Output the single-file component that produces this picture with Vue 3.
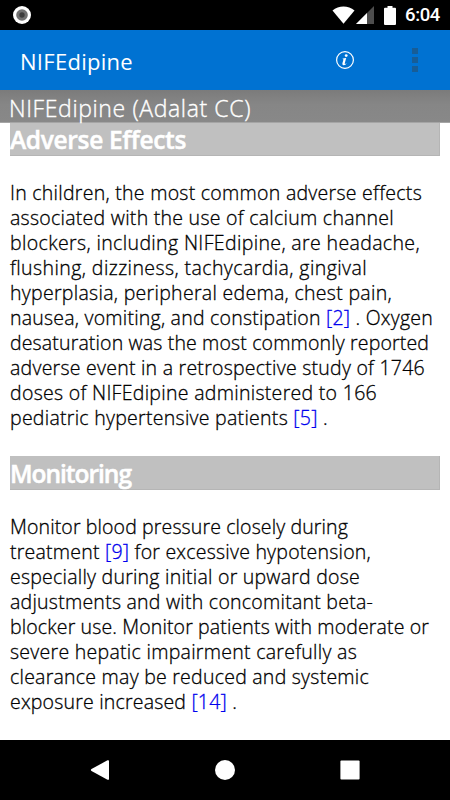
<template>
  <div class="screen">
    <header class="status-bar">
      <svg class="record-icon" viewBox="0 0 20 20">
        <circle cx="10" cy="10" r="9" fill="#fff" />
        <circle cx="10" cy="10" r="5.8" fill="#707070" />
        <circle cx="10" cy="10" r="2.7" fill="#3c3c3c" />
      </svg>
      <div class="status-icons">
        <svg class="wifi" viewBox="0 0 24 18"><path d="M0.5 4.4C7 -1.2 17 -1.2 23.5 4.4L12 18Z" /></svg>
        <svg class="signal" viewBox="0 0 18 18">
          <path d="M18 0V18H0Z" fill="#4d4d4d" />
          <path d="M11 7V18H0Z" />
        </svg>
        <svg class="battery" viewBox="0 0 12 19"><path d="M3.5 0H8.5V1.7H11Q12 1.7 12 2.7V18Q12 19 11 19H1Q0 19 0 18V2.7Q0 1.7 1 1.7H3.5Z" /></svg>
        <span class="clock"><FitText text="6:04" :width="35" /></span>
      </div>
    </header>

    <div class="app-bar">
      <h1 class="app-title"><FitText text="NIFEdipine" :width="113" /></h1>
      <button class="info-button" aria-label="Info">
        <svg viewBox="0 0 20 20">
          <circle cx="10" cy="10" r="8.4" fill="none" stroke="#fff" stroke-width="1.2" />
          <circle cx="11.2" cy="5.6" r="1.4" fill="#fff" />
          <path d="M7.3 8.8Q9.2 8.1 11.2 7.9L9.7 13.6Q9.6 14.6 11.8 13.2Q10.3 15.6 8.4 15.3Q6.9 14.9 7.4 13.2L8.5 9.5Z" fill="#fff" />
        </svg>
      </button>
      <button class="more-button" aria-label="More">
        <i></i><i></i><i></i>
      </button>
    </div>

    <div class="drug-bar"><FitText text="NIFEdipine (Adalat CC)" :width="242" /></div>

    <main class="content">
      <section v-for="section in sections" :key="section.title">
        <h2 class="section-title"><FitText :text="section.title" :width="section.width" /></h2>
        <p class="section-text">
          <FitText v-for="line in section.lines" :key="line[0]" :text="line[0]" :width="line[1]" />
        </p>
      </section>
    </main>

    <nav class="nav-bar">
      <svg viewBox="0 0 20 20"><path d="M17.5 0.3Q19 -0.2 19 1V19Q19 20.2 17.5 19.7L1.5 11Q0.2 10 1.5 9Z" /></svg>
      <svg viewBox="0 0 20 20"><circle cx="10" cy="10" r="10" /></svg>
      <svg viewBox="0 0 20 20"><rect x="0.4" y="0.4" width="19.2" height="19.2" rx="1" /></svg>
    </nav>
  </div>
</template>

<script setup>
import { h, ref, onMounted } from 'vue'

// one line of text, tracked so that it fills the given width
const FitText = {
  props: { text: String, width: Number },
  setup(props) {
    const el = ref(null)
    const spacing = ref(0)
    onMounted(async () => {
      await document.fonts.ready
      const natural = el.value.getBoundingClientRect().width
      spacing.value = (props.width - natural) / props.text.length
    })
    // references such as [2] are links
    const parts = props.text.split(/(\[\d+\])/)
    return () => h('span', { class: 'line' }, [
      h('span', { ref: el, style: { letterSpacing: `${spacing.value}px` } },
        parts.map(part => part.startsWith('[') ? h('a', { class: 'cite' }, part) : part))
    ])
  }
}

const sections = [
  {
    title: 'Adverse Effects',
    width: 176,
    lines: [
      ['In children, the most common adverse effects', 412],
      ['associated with the use of calcium channel', 384],
      ['blockers, including NIFEdipine, are headache,', 410],
      ['flushing, dizziness, tachycardia, gingival', 357],
      ['hyperplasia, peripheral edema, chest pain,', 382],
      ['nausea, vomiting, and constipation [2] . Oxygen', 423],
      ['desaturation was the most commonly reported', 419],
      ['adverse event in a retrospective study of 1746', 415],
      ['doses of NIFEdipine administered to 166', 367],
      ['pediatric hypertensive patients [5] .', 318]
    ]
  },
  {
    title: 'Monitoring',
    width: 121,
    lines: [
      ['Monitor blood pressure closely during', 338],
      ['treatment [9] for excessive hypotension,', 361],
      ['especially during initial or upward dose', 350],
      ['adjustments and with concomitant beta-', 363],
      ['blocker use. Monitor patients with moderate or', 419],
      ['severe hepatic impairment carefully as', 347],
      ['clearance may be reduced and systemic', 359],
      ['exposure increased [14] .', 227]
    ]
  }
]
</script>

<style>
body {
  margin: 0;
  background: #fff;
}
.line {
  display: block;
  white-space: pre;
}
.line .cite {
  color: #0000ee;
}
</style>

<style scoped>
.screen {
  display: flex;
  flex-direction: column;
  height: 800px;
  overflow: hidden;
  font-family: "Open Sans", "Noto Sans", sans-serif;
  color: #000;
}
.status-bar {
  display: flex;
  align-items: center;
  justify-content: space-between;
  flex: 0 0 30px;
  box-sizing: border-box;
  padding: 0 10px 0 12px;
  background: #000;
}
.record-icon {
  width: 20px;
  height: 20px;
}
.status-icons {
  display: flex;
  align-items: center;
  fill: #fff;
}
.wifi {
  width: 23px;
  height: 18px;
}
.signal {
  width: 18px;
  height: 18px;
  margin-left: 1px;
}
.battery {
  width: 12px;
  height: 19px;
  margin: 0 9px 0 10px;
}
.clock {
  width: 35px;
  color: #fff;
  font-family: Roboto, sans-serif;
  font-size: 18.5px;
  font-weight: 500;
  line-height: 30px;
}
.app-bar {
  display: flex;
  align-items: center;
  flex: 0 0 60px;
  box-sizing: border-box;
  padding: 0 32px 0 20px;
  background: #0072d2;
}
.app-title {
  flex: 1;
  margin: 2px 0 0;
  color: #fff;
  font-size: 22px;
  font-weight: 400;
  line-height: 30px;
}
.info-button,
.more-button {
  padding: 0;
  border: 0;
  background: none;
}
.info-button svg {
  display: block;
  width: 20px;
  height: 20px;
  margin-top: -1px;
}
.more-button {
  display: grid;
  gap: 3px;
  margin-left: 57px;
}
.more-button i {
  width: 6px;
  height: 6px;
  background: #175d97;
}
.drug-bar {
  position: relative;
  z-index: 1;
  flex: 0 0 33px;
  box-sizing: border-box;
  height: 33px;
  padding: 2px 0 0 9px;
  border-bottom: 1px solid #a5a5a5;
  background: linear-gradient(#7b7b7b, #868686 45%, #888);
  color: #fff;
  font-size: 23px;
  font-weight: 300;
  line-height: 32px;
  -webkit-text-stroke: 0.35px #fff;
}
.content {
  flex: 1;
  min-height: 0;
  margin-top: -1px;
  padding: 0 10px;
  overflow: hidden;
}
.section-title {
  box-sizing: border-box;
  height: 34px;
  margin: 0;
  border: solid #b5b5b5;
  border-width: 0 1px 1px 0;
  background: #c0c0c0;
  color: #fff;
  font-size: 24.5px;
  font-weight: 600;
  line-height: 35px;
  -webkit-text-stroke: 0.5px #fff;
}
.section-text {
  margin: 24px 0 26px;
  font-size: 19.5px;
  font-weight: 300;
  line-height: 25px;
  -webkit-text-stroke: 0.3px;
}
.nav-bar {
  display: flex;
  align-items: center;
  justify-content: space-between;
  flex: 0 0 60px;
  box-sizing: border-box;
  padding: 0 90px;
  background: #000;
  fill: #fff;
}
.nav-bar svg {
  width: 20px;
  height: 20px;
}
</style>
